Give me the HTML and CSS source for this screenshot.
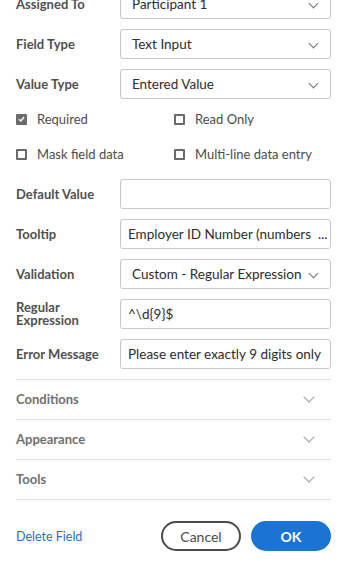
FILE: index.html
```html
<!DOCTYPE html>
<html lang="en">
<head>
  <meta charset="UTF-8">
  <title>Field Properties</title>
  <link rel="stylesheet" href="styles.css">
</head>
<body>
  <div class="panel">
    <div class="field-row">
      <label>Assigned To</label>
      <div class="select">Participant 1<span class="chev"></span></div>
    </div>
    <div class="field-row">
      <label>Field Type</label>
      <div class="select">Text Input<span class="chev"></span></div>
    </div>
    <div class="field-row">
      <label>Value Type</label>
      <div class="select">Entered Value<span class="chev"></span></div>
    </div>

    <div class="checks">
      <div class="check"><span class="box checked"><svg width="8" height="8" viewBox="0 0 8 8"><path d="M1 4.2 L3.2 6.2 L7 1.8" fill="none" stroke="#fff" stroke-width="1.6"/></svg></span>Required</div>
      <div class="check"><span class="box"></span>Read Only</div>
      <div class="check"><span class="box"></span>Mask field data</div>
      <div class="check"><span class="box"></span>Multi-line data entry</div>
    </div>

    <div class="field-row">
      <label>Default Value</label>
      <div class="input"></div>
    </div>
    <div class="field-row">
      <label>Tooltip</label>
      <div class="input">Employer ID Number (numbers &nbsp;...</div>
    </div>
    <div class="field-row">
      <label>Validation</label>
      <div class="select">Custom - Regular Expression<span class="chev"></span></div>
    </div>
    <div class="field-row">
      <label class="two-line">Regular Expression</label>
      <div class="input">^\d{9}$</div>
    </div>
    <div class="field-row">
      <label>Error Message</label>
      <div class="input">Please enter exactly 9 digits only</div>
    </div>

    <div class="sections">
      <div class="section">Conditions<span class="chev light"></span></div>
      <div class="section">Appearance<span class="chev light"></span></div>
      <div class="section">Tools<span class="chev light"></span></div>
    </div>

    <div class="footer">
      <a class="delete-link">Delete Field</a>
      <div class="buttons">
        <button class="btn-cancel">Cancel</button>
        <button class="btn-ok">OK</button>
      </div>
    </div>
  </div>
</body>
</html>
```
FILE: styles.css
```css
body {
  margin: 0;
  font-family: Lato, "Open Sans", sans-serif;
  background: #fff;
  color: #2c2c2c;
}
.panel {
  margin-top: -11px;
  padding: 0 12px 0 16px;
  display: flex;
  flex-direction: column;
  gap: 10px;
}
.field-row {
  display: grid;
  grid-template-columns: 104px 1fr;
  align-items: center;
  height: 30px;
}
.field-row label {
  font-size: 13px;
  font-weight: bold;
  color: #505050;
}
.field-row label.two-line {
  line-height: 13px;
  width: 70px;
}
.select, .input {
  position: relative;
  height: 30px;
  box-sizing: border-box;
  border: 1px solid #c6c6c6;
  border-radius: 3px;
  padding: 0 11px;
  font-size: 13.5px;
  line-height: 28px;
  white-space: nowrap;
  overflow: hidden;
}
.input {
  padding: 0 7px;
}
.chev {
  position: absolute;
  right: 13px;
  top: 10px;
  width: 6px;
  height: 6px;
  border-right: 1.5px solid #707070;
  border-bottom: 1.5px solid #707070;
  transform: rotate(45deg);
}
.chev.light {
  right: 18px;
  top: 13px;
  width: 7px;
  height: 7px;
  border-color: #a0a0a0;
}
.checks {
  display: grid;
  grid-template-columns: 158px 1fr;
  row-gap: 15px;
  padding-bottom: 5px;
}
.check {
  display: flex;
  align-items: center;
  height: 20px;
  font-size: 13px;
  color: #4b4b4b;
}
.box {
  width: 11px;
  height: 11px;
  box-sizing: border-box;
  border: 2px solid #6a6a6a;
  border-radius: 1px;
  margin-right: 10px;
  display: flex;
  align-items: center;
  justify-content: center;
}
.box.checked {
  background: #6a6a6a;
}
.sections {
  border-top: 1px solid #e1e1e1;
}
.section {
  position: relative;
  height: 39px;
  line-height: 39px;
  border-bottom: 1px solid #e1e1e1;
  font-size: 13px;
  font-weight: bold;
  color: #707070;
}
.footer {
  display: flex;
  justify-content: space-between;
  align-items: center;
  margin-top: 11px;
}
.delete-link {
  font-size: 12.5px;
  color: #1f6fc8;
}
.buttons {
  display: flex;
  gap: 10px;
}
.buttons button {
  width: 80px;
  height: 30px;
  border-radius: 15px;
  font-family: Lato, "Open Sans", sans-serif;
  font-size: 14px;
}
.btn-cancel {
  background: #fff;
  border: 2px solid #4b4b4b;
  color: #4b4b4b;
}
.btn-ok {
  background: #1b73d3;
  border: none;
  color: #fff;
  font-weight: bold;
}
```
